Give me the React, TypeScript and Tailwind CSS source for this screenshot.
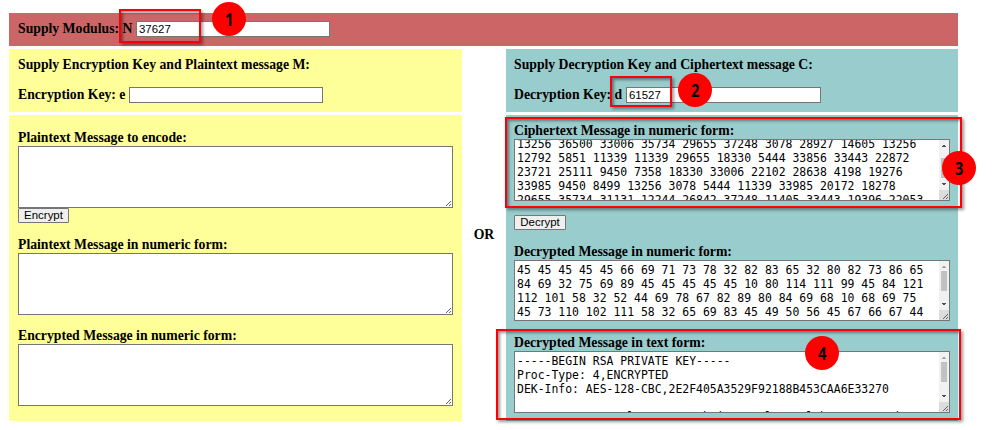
import type { ReactNode } from "react";

const cipher = [
  "13256 36500 33006 35734 29655 37248 3078 28927 14605 13256",
  "12792 5851 11339 11339 29655 18330 5444 33856 33443 22872",
  "23721 25111 9450 7358 18330 33006 22102 28638 4198 19276",
  "33985 9450 8499 13256 3078 5444 11339 33985 20172 18278",
  "29655 35734 31131 12244 26842 37248 11405 33443 19396 22053",
];
const numeric = [
  "45 45 45 45 45 66 69 71 73 78 32 82 83 65 32 80 82 73 86 65",
  "84 69 32 75 69 89 45 45 45 45 45 10 80 114 111 99 45 84 121",
  "112 101 58 32 52 44 69 78 67 82 89 80 84 69 68 10 68 69 75",
  "45 73 110 102 111 58 32 65 69 83 45 49 50 56 45 67 66 67 44",
];
const plain = [
  "-----BEGIN RSA PRIVATE KEY-----",
  "Proc-Type: 4,ENCRYPTED",
  "DEK-Info: AES-128-CBC,2E2F405A3529F92188B453CAA6E33270",
  " ",
  "                l          h i      l     l h          h",
];

function Label({ children }: { children: ReactNode }) {
  return <div className="h-4 whitespace-nowrap leading-4">{children}</div>;
}

function Grip() {
  return (
    <svg className="absolute bottom-0 right-0 h-[7px] w-[7px]" viewBox="0 0 7 7" fill="#606060" shapeRendering="crispEdges">
      <path d="M1 5h1v1H1zM2 4h1v1H2zM3 3h1v1H3zM4 2h1v1H4zM5 1h1v1H5zM4 5h1v1H4zM5 4h1v1H5z" />
    </svg>
  );
}

type AreaProps = {
  lines?: string[];
  scroll?: boolean;
  thumb?: "top" | "mid";
  shift?: string;
  size?: string;
};

function Area({ lines = [], scroll, thumb = "top", shift = "pt-0.5", size = "h-[62px] w-[436px]" }: AreaProps) {
  return (
    <div className={`relative flex overflow-hidden border border-[#767676] bg-white ${size}`}>
      <div className={`min-w-0 flex-1 overflow-hidden pl-0.5 font-['DejaVu_Sans_Mono',monospace] text-[11.45px] font-normal leading-[14px] ${shift}`}>
        {lines.map((line, i) => (
          <div key={i} className="h-[14px] whitespace-pre">{line}</div>
        ))}
      </div>
      {scroll && (
        <div className="flex w-2.5 shrink-0 flex-col bg-[#f1f1f1]">
          <svg className="h-2.5 w-2.5 shrink-0" viewBox="0 0 10 10" shapeRendering="crispEdges">
            <path d="M4 5h2v1h1v1H3V6h1z" fill={thumb === "top" ? "#a3a3a3" : "#505050"} />
          </svg>
          <div className={thumb === "top" ? "ml-0.5 h-5 w-1.5 bg-[#c1c1c1]" : "ml-0.5 mt-2 h-5 w-1.5 bg-[#c1c1c1]"} />
          <div className="flex-1" />
          <svg className="h-2.5 w-2.5 shrink-0" viewBox="0 0 10 10" shapeRendering="crispEdges">
            <path d="M3 3h4v1H6v1H4V4H3z" fill="#505050" />
          </svg>
          <div className="h-2.5 shrink-0 bg-[#dcdcdc]" />
        </div>
      )}
      <Grip />
    </div>
  );
}

function Field({ value = "", width = "w-[194px]" }: { value?: string; width?: string }) {
  return (
    <div className={`h-4 border border-[#767676] bg-white pl-0.5 font-['Liberation_Sans',sans-serif] text-[11.45px] font-normal leading-[14px] ${width}`}>
      {value}
    </div>
  );
}

function Button({ children, width }: { children: ReactNode; width: string }) {
  return (
    <button className={`block h-[15px] rounded-[1px] border border-[#767676] bg-[#efefef] text-center font-['Liberation_Sans',sans-serif] text-[11.45px] font-normal leading-[13px] ${width}`}>
      {children}
    </button>
  );
}

function Frame({ place }: { place: string }) {
  return (
    <div className={`absolute border-2 border-[#fb0007] shadow-[2px_2px_3px_rgba(0,0,0,0.4),inset_2px_2px_3px_rgba(0,0,0,0.4)] ${place}`} />
  );
}

function Pin({ n, place }: { n: number; place: string }) {
  return (
    <div className={`absolute flex h-[34px] w-[34px] items-center justify-center rounded-full bg-[#ff0000] font-['Open_Sans',sans-serif] text-[18px] font-bold ${place}`}>
      <span className="scale-x-[0.82]">{n}</span>
    </div>
  );
}

export default function App() {
  return (
    <main className="relative h-[430px] w-[995px] overflow-hidden bg-white pl-[9px] pt-[13px] font-['Liberation_Serif',serif] text-[13.73px] font-bold leading-4 text-black">
      <div className="grid w-[949px] grid-cols-[453px_44px_452px] grid-rows-[33px_63px_306px] gap-y-[3px]">
        <section className="col-span-3 flex items-start bg-[#cc6666] pl-[9px] pt-2">
          <span className="w-[118px] whitespace-nowrap">Supply Modulus: N</span>
          <Field value="37627" />
        </section>

        <section className="bg-[#ffff99] pl-[9px] pt-2">
          <Label>Supply Encryption Key and Plaintext message M:</Label>
          <div className="mt-[14px] flex">
            <span className="w-[111px] whitespace-nowrap">Encryption Key: e</span>
            <Field />
          </div>
        </section>
        <div className="row-span-2 flex items-center justify-center">OR</div>
        <section className="bg-[#99cccc] pl-2 pt-2">
          <Label>Supply Decryption Key and Ciphertext message C:</Label>
          <div className="mt-[14px] flex">
            <span className="w-[112px] whitespace-nowrap">Decryption Key: d</span>
            <Field value="61527" width="w-[195px]" />
          </div>
        </section>

        <section className="bg-[#ffff99] pl-[9px] pt-[15px]">
          <Label>Plaintext Message to encode:</Label>
          <Area size="h-[62px] w-[435px]" />
          <Button width="w-[51px]">Encrypt</Button>
          <div className="mt-[14px]"><Label>Plaintext Message in numeric form:</Label></div>
          <Area size="h-[62px] w-[435px]" />
          <div className="mt-[13px]"><Label>Encrypted Message in numeric form:</Label></div>
          <Area size="h-[62px] w-[435px]" />
        </section>
        <section className="bg-[#99cccc] pl-2 pt-2">
          <Label>Ciphertext Message in numeric form:</Label>
          <Area lines={cipher} scroll thumb="mid" shift="-mt-[3px]" />
          <div className="mt-[14px]"><Button width="w-[52px]">Decrypt</Button></div>
          <div className="mt-[14px]"><Label>Decrypted Message in numeric form:</Label></div>
          <Area lines={numeric} scroll size="h-[61px] w-[436px]" />
          <div className="mt-[14px]"><Label>Decrypted Message in text form:</Label></div>
          <Area lines={plain} scroll />
        </section>
      </div>

      <Frame place="left-[119px] top-[9px] h-[34px] w-[82px]" />
      <Frame place="left-[610px] top-[76px] h-[31px] w-[62px]" />
      <Frame place="left-[505px] top-[117px] h-[91px] w-[457px]" />
      <Frame place="left-[496px] top-[329px] h-[91px] w-[465px]" />
      <Pin n={1} place="left-[212px] top-[2px]" />
      <Pin n={2} place="left-[678px] top-[73px]" />
      <Pin n={3} place="left-[942px] top-[151px]" />
      <Pin n={4} place="left-[805px] top-[336px]" />
    </main>
  );
}
